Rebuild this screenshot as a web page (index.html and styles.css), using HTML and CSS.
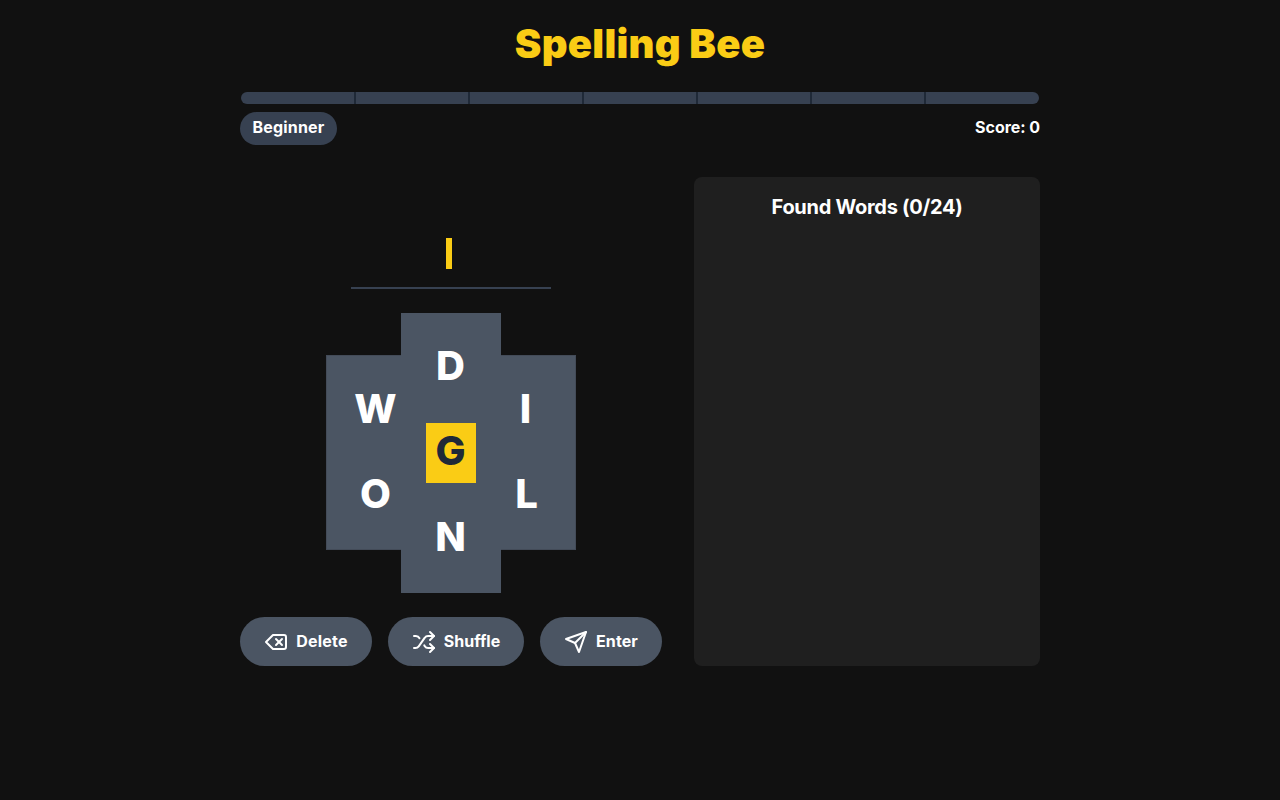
FILE: index.html
```html
<!DOCTYPE html>
<html lang="en">
<head>
<meta charset="utf-8">
<title>Spelling Bee</title>
<link rel="stylesheet" href="styles.css">
</head>
<body>
<main class="app">
  <h1 class="title">Spelling Bee</h1>
  <div class="progress">
    <div class="seg"></div><div class="seg"></div><div class="seg"></div><div class="seg"></div><div class="seg"></div><div class="seg"></div><div class="seg"></div>
  </div>
  <div class="status">
    <span class="badge">Beginner</span>
    <span class="score">Score: 0</span>
  </div>
  <div class="columns">
    <section class="game">
      <div class="entry"><span class="caret"></span></div>
      <div class="hive">
        <div class="cell c-d">D</div>
        <div class="cell c-w">W</div>
        <div class="cell c-i">I</div>
        <div class="cell c-o">O</div>
        <div class="cell c-l">L</div>
        <div class="cell c-n">N</div>
        <div class="center">G</div>
      </div>
      <div class="actions">
        <button class="btn btn-delete">
          <svg class="icon" viewBox="0 0 24 24"><path d="M20 5H9l-7 7 7 7h11a2 2 0 0 0 2-2V7a2 2 0 0 0-2-2Z"/><path d="m18 9-6 6"/><path d="m12 9 6 6"/></svg>
          <span>Delete</span>
        </button>
        <button class="btn btn-shuffle">
          <svg class="icon" viewBox="0 0 24 24"><path d="M2 18h1.4c1.3 0 2.5-.6 3.3-1.7l6.1-8.6c.7-1.1 2-1.7 3.3-1.7H22"/><path d="m18 2 4 4-4 4"/><path d="M2 6h1.9c1.5 0 2.9.9 3.6 2.2"/><path d="M22 18h-5.9c-1.3 0-2.6-.7-3.3-1.8l-.5-.8"/><path d="m18 14 4 4-4 4"/></svg>
          <span>Shuffle</span>
        </button>
        <button class="btn btn-enter">
          <svg class="icon" viewBox="0 0 24 24"><path d="m22 2-7 20-4-9-9-4Z"/><path d="M22 2 11 13"/></svg>
          <span>Enter</span>
        </button>
      </div>
    </section>
    <aside class="found">
      <h2 class="found-title">Found Words (0/24)</h2>
    </aside>
  </div>
</main>
</body>
</html>
```
FILE: styles.css
```css
* { box-sizing: border-box; }
html, body { margin: 0; height: 100%; }
body {
  background: #111111;
  color: #ffffff;
  font-family: Inter, "Liberation Sans", sans-serif;
}
.app { width: 800px; margin: 0 auto; padding-top: 16px; }
.title {
  margin: 0;
  height: 56px;
  line-height: 56px;
  text-align: center;
  font-size: 40px;
  font-weight: 900;
  letter-spacing: 0.25px;
  color: #facc15;
}
.progress {
  display: grid;
  grid-template-columns: repeat(7, 1fr);
  height: 12px;
  margin: 20px 1px 0;
  border-radius: 6px;
  overflow: hidden;
  background: #374151;
}
.seg + .seg { border-left: 1px solid #1f2937; box-shadow: -1px 0 0 #1f2937; }
.status {
  display: flex;
  justify-content: space-between;
  align-items: center;
  margin-top: 8px;
  height: 33px;
}
.badge {
  width: 97px;
  height: 33px;
  line-height: 31px;
  text-align: center;
  border-radius: 17px;
  background: #374151;
  font-size: 16px;
  font-weight: 700;
  letter-spacing: 0.2px;
}
.score { font-size: 16px; font-weight: 700; position: relative; top: -2px; letter-spacing: -0.05px; }
.columns { display: flex; justify-content: space-between; margin-top: 32px; }
.game { width: 422px; display: flex; flex-direction: column; align-items: center; }
.entry {
  width: 200px;
  height: 112px;
  padding-top: 61px;
  display: flex;
  justify-content: center;
  align-items: flex-start;
  border-bottom: 2px solid #374151;
  margin-left: -1px;
}
.caret { width: 6px; height: 31px; background: #facc15; margin-left: -4px; }
.hive { position: relative; width: 250px; height: 280px; margin-top: 24px; margin-left: -1px; }
.cell {
  position: absolute;
  width: 100px;
  height: 108px;
  background: #4b5563;
  display: flex;
  align-items: center;
  justify-content: center;
  padding-bottom: 3px;
  font-size: 40px;
  font-weight: 800;
}
.c-d { left: 75px; top: 0; z-index: 1; }
.c-w { left: 0; top: 42px; padding-bottom: 2px; box-shadow: inset 1px 1px 0 #434b58; }
.c-i { left: 150px; top: 42px; padding-bottom: 2px; box-shadow: inset -1px 1px 0 #434b58; }
.c-o { left: 0; top: 129px; padding-bottom: 6px; box-shadow: inset 1px -1px 0 #434b58; }
.c-l { left: 150px; top: 129px; padding-bottom: 6px; padding-left: 2px; box-shadow: inset -1px -1px 0 #434b58; }
.c-n { left: 75px; top: 172px; padding-bottom: 6px; z-index: 1; }
.center {
  position: absolute;
  z-index: 2;
  left: 100px;
  top: 110px;
  width: 50px;
  height: 60px;
  background: #facc15;
  box-shadow: 0 0 0 2px #4b5563;
  color: #1f2937;
  display: flex;
  align-items: center;
  justify-content: center;
  padding-bottom: 5px;
  font-size: 40px;
  font-weight: 800;
}
.actions { display: flex; gap: 16px; margin-top: 24px; align-self: stretch; }
.btn {
  display: flex;
  align-items: center;
  justify-content: center;
  gap: 8px;
  height: 49px;
  padding: 0 0 2px;
  border: 0;
  border-radius: 25px;
  background: #4b5563;
  color: #ffffff;
  font-family: inherit;
  font-size: 16px;
  font-weight: 700;
  letter-spacing: 0.1px;
}
.btn-delete { width: 132px; letter-spacing: 0.25px; }
.btn-shuffle { width: 136px; letter-spacing: 0; }
.btn-enter { width: 122px; }
.icon { width: 24px; height: 24px; margin-top: 2px; fill: none; stroke: currentColor; stroke-width: 2; stroke-linecap: round; stroke-linejoin: round; }
.found { width: 346px; height: 489px; padding: 16px; background: #1f1f1f; border-radius: 8px; }
.found-title { margin: 0; text-align: center; font-size: 20px; line-height: 28px; font-weight: 700; letter-spacing: -0.28px; }
```
